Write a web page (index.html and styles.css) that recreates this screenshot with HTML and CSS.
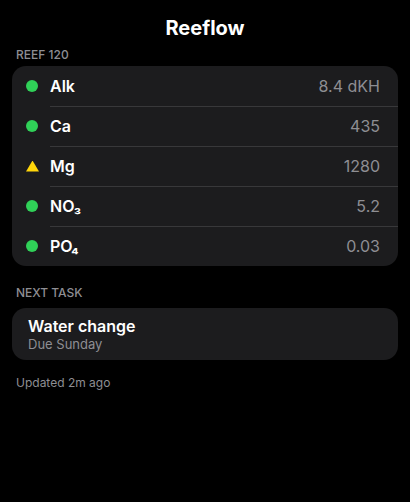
FILE: index.html
```html
<!DOCTYPE html>
<html lang="en">
<head>
    <meta charset="UTF-8">
    <meta name="viewport" content="width=device-width, initial-scale=1.0">
    <title>Reeflow</title>
    <link rel="stylesheet" href="styles.css">
</head>
<body>
    <div class="app">
        <h1 class="title">Reeflow</h1>

        <p class="section-label">REEF 120</p>
        <ul class="card params">
            <li class="param">
                <span class="status ok"></span>
                <span class="name">Alk</span>
                <span class="value">8.4 dKH</span>
            </li>
            <li class="param">
                <span class="status ok"></span>
                <span class="name">Ca</span>
                <span class="value">435</span>
            </li>
            <li class="param">
                <span class="status warn"></span>
                <span class="name">Mg</span>
                <span class="value">1280</span>
            </li>
            <li class="param">
                <span class="status ok"></span>
                <span class="name">NO₃</span>
                <span class="value">5.2</span>
            </li>
            <li class="param">
                <span class="status ok"></span>
                <span class="name">PO₄</span>
                <span class="value">0.03</span>
            </li>
        </ul>

        <p class="section-label">NEXT TASK</p>
        <div class="card task">
            <div class="task-title">Water change</div>
            <div class="task-due">Due Sunday</div>
        </div>

        <p class="updated">Updated 2m ago</p>
    </div>
</body>
</html>
```

FILE: styles.css
```css
body {
    margin: 0;
    padding: 0;
    background: #000;
    color: #fff;
    font-family: Inter, "Noto Sans", sans-serif;
}

.app {
    padding: 0 12px;
}

.title {
    margin: 0;
    padding-top: 14px;
    height: 28px;
    font-size: 20px;
    font-weight: 700;
    text-align: center;
    line-height: 28px;
}

.section-label {
    margin: 0;
    padding: 5px 4px 0;
    height: 19px;
    font-size: 12px;
    line-height: 16px;
    font-weight: 500;
    color: #8e8e93;
}

.card {
    background: #1c1c1e;
    border-radius: 14px;
}

.params {
    list-style-type: none;
    margin: 0 0 14px;
    padding: 0;
    overflow: hidden;
}

.param {
    display: flex;
    align-items: center;
    height: 40px;
    padding: 0 18px 0 14px;
    position: relative;
}

.param + .param::before {
    content: "";
    position: absolute;
    top: 0;
    left: 38px;
    right: 0;
    height: 1px;
    background: #38383a;
}

.status {
    width: 12px;
    height: 12px;
    margin-right: 12px;
    flex-shrink: 0;
}

.status.ok {
    border-radius: 50%;
    background: #30d158;
}

.status.warn {
    width: 13px;
    height: 11px;
    margin-right: 11px;
    background: #ffd60a;
    clip-path: polygon(50% 0, 100% 100%, 0 100%);
}

.name {
    flex: 1;
    font-size: 16px;
    font-weight: 600;
}

.value {
    font-size: 16px;
    color: #8e8e93;
}

.task {
    height: 52px;
    margin-top: 4px;
    padding: 0 16px;
    display: flex;
    flex-direction: column;
    justify-content: center;
}

.task-title {
    font-size: 16px;
    font-weight: 600;
    line-height: 20px;
}

.task-due {
    font-size: 13px;
    color: #8e8e93;
    line-height: 16px;
}

.updated {
    margin: 15px 4px 0;
    font-size: 12px;
    color: #8e8e93;
}
```
